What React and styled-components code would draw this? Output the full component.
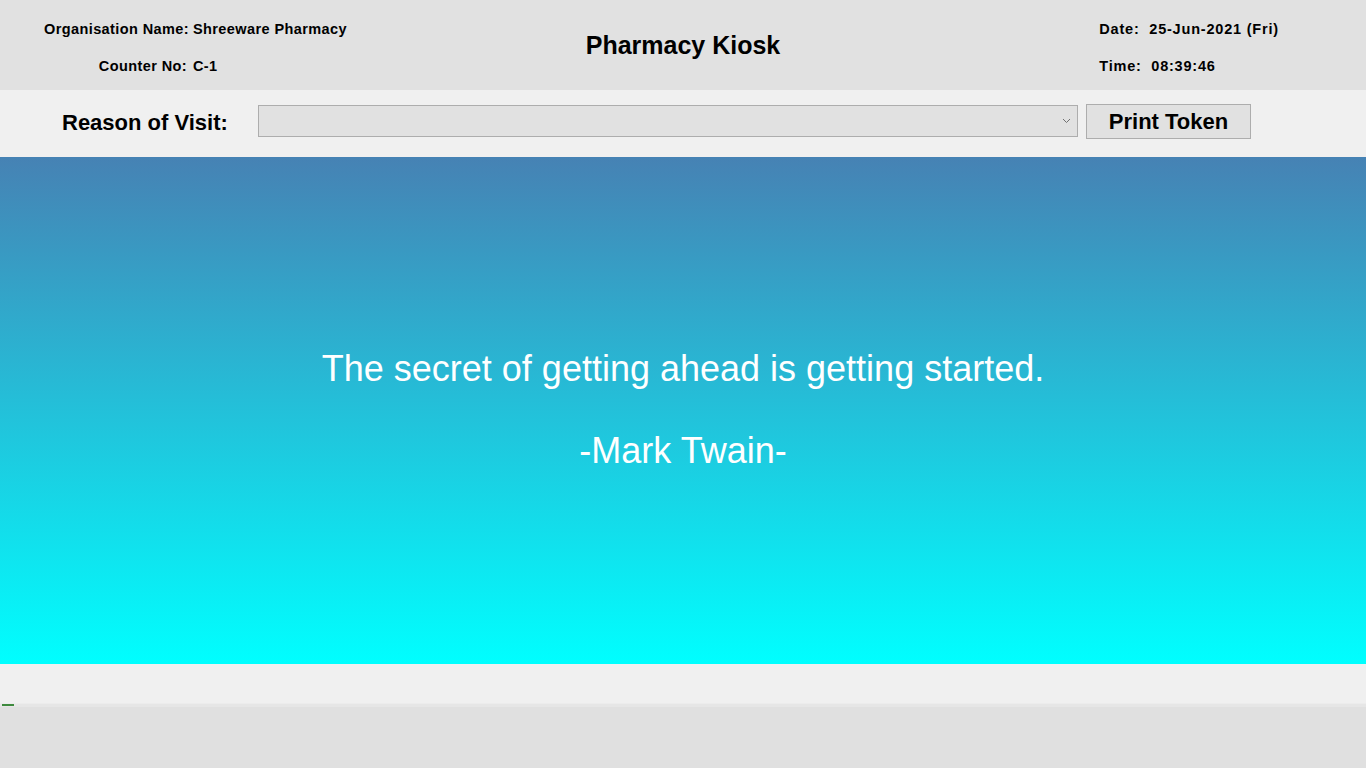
import React from "react";
import styled, { createGlobalStyle } from "styled-components";

const GlobalStyle = createGlobalStyle`
  html, body {
    margin: 0;
    padding: 0;
    background: #e0e0e0;
  }
  body {
    font-family: "Liberation Sans", Arial, sans-serif;
    color: #000;
  }
  * { box-sizing: border-box; }
`;

const Page = styled.div`
  width: 1366px;
  height: 768px;
  display: flex;
  flex-direction: column;
  overflow: hidden;
`;

const Header = styled.header`
  height: 90px;
  background: #e1e1e1;
  display: grid;
  grid-template-columns: 1fr auto 1fr;
  align-items: center;
`;

const InfoGrid = styled.div`
  display: grid;
  grid-template-columns: ${(p) => p.$labelWidth}px auto;
  column-gap: ${(p) => p.$gap}px;
  row-gap: 21px;
  padding-left: ${(p) => p.$left}px;
  padding-top: 4px;
  align-content: center;
  font-size: 14.5px;
  font-weight: bold;
  letter-spacing: ${(p) => p.$spacing}px;
  line-height: 16px;
`;

const InfoLabel = styled.span`
  text-align: ${(p) => p.$align || "right"};
  white-space: nowrap;
`;

const InfoValue = styled.span`
  white-space: nowrap;
  padding-left: ${(p) => p.$shift || 0}px;
`;

const Title = styled.h1`
  margin: 0;
  font-size: 25px;
  font-weight: bold;
  line-height: 30px;
`;

const Toolbar = styled.div`
  height: 67px;
  background: #f0f0f0;
  display: flex;
  align-items: center;
  padding-left: 62px;
  padding-bottom: 5px;
`;

const ToolLabel = styled.label`
  font-size: 22px;
  font-weight: bold;
  width: 196px;
  white-space: nowrap;
  padding-top: 4px;
`;

const Select = styled.div`
  width: 820px;
  height: 32px;
  background: #e1e1e1;
  border: 1px solid #adadad;
  display: flex;
  align-items: center;
  justify-content: flex-end;
  padding-right: 6px;
`;

const Button = styled.button`
  margin-left: 8px;
  width: 165px;
  height: 35px;
  background: #e1e1e1;
  border: 1px solid #adadad;
  font-family: "Liberation Sans", Arial, sans-serif;
  font-size: 22px;
  font-weight: bold;
  color: #000;
  padding: 2px 0 0;
  cursor: pointer;
`;

const QuotePanel = styled.main`
  height: 507px;
  background: linear-gradient(to bottom, #4682b4 0%, #00ffff 100%);
  display: flex;
  flex-direction: column;
  align-items: center;
  justify-content: center;
  gap: 41px;
  color: #fff;
  font-size: 36px;
  padding-bottom: 2px;
`;

const QuoteLine = styled.p`
  margin: 0;
  line-height: 41px;
  white-space: nowrap;
`;

const Footer = styled.footer`
  flex: 1;
  display: flex;
  flex-direction: column;
`;

const StatusStrip = styled.div`
  height: 39px;
  background: #f0f0f0;
`;

const Progress = styled.div`
  height: 4px;
  background: #e6e6e6;
  border-top: 1px solid #ececec;
  position: relative;
`;

const ProgressFill = styled.div`
  position: absolute;
  left: 2px;
  top: 0;
  height: 2px;
  background: #3e8a3e;
`;

const BottomArea = styled.div`
  flex: 1;
  background: #e0e0e0;
`;

function Chevron() {
  return (
    <svg width="9" height="6" viewBox="0 0 9 6">
      <polyline points="1,1 4.5,4.5 8,1" fill="none" stroke="#707070" strokeWidth="1" />
    </svg>
  );
}

export default function App() {
  return (
    <>
      <GlobalStyle />
      <Page>
        <Header>
          <InfoGrid $labelWidth={143} $gap={6} $left={44} $spacing={0.4}>
            <InfoLabel>Organisation Name:</InfoLabel>
            <InfoValue>Shreeware Pharmacy</InfoValue>
            <InfoLabel>Counter No:</InfoLabel>
            <InfoValue>C-1</InfoValue>
          </InfoGrid>
          <Title>Pharmacy Kiosk</Title>
          <InfoGrid $labelWidth={44} $gap={6} $left={319} $spacing={0.8}>
            <InfoLabel $align="left">Date:</InfoLabel>
            <InfoValue>25-Jun-2021 (Fri)</InfoValue>
            <InfoLabel $align="left">Time:</InfoLabel>
            <InfoValue $shift={2}>08:39:46</InfoValue>
          </InfoGrid>
        </Header>
        <Toolbar>
          <ToolLabel>Reason of Visit:</ToolLabel>
          <Select>
            <Chevron />
          </Select>
          <Button>Print Token</Button>
        </Toolbar>
        <QuotePanel>
          <QuoteLine>The secret of getting ahead is getting started.</QuoteLine>
          <QuoteLine>-Mark Twain-</QuoteLine>
        </QuotePanel>
        <Footer>
          <StatusStrip />
          <Progress>
            <ProgressFill style={{ width: "12px" }} />
          </Progress>
          <BottomArea />
        </Footer>
      </Page>
    </>
  );
}
